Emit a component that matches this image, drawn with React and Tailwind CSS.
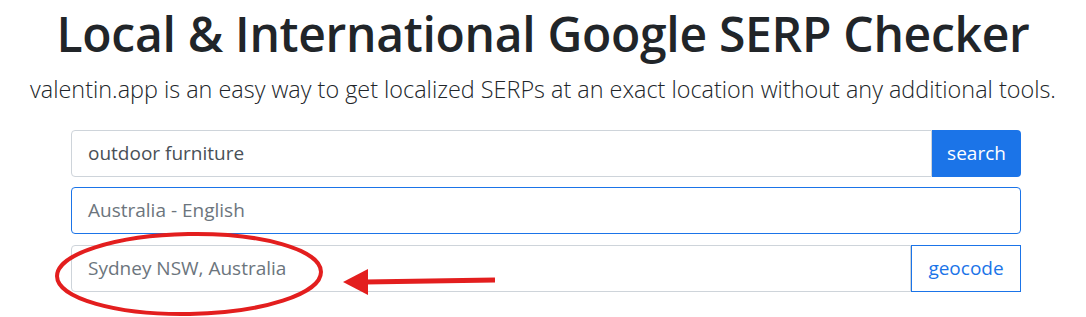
export default function App() {
  return (
    <div className="relative w-[1086px] h-[317px] bg-white overflow-hidden" style={{ fontFamily: '"Open Sans", "Noto Sans", sans-serif' }}>
      <h1 className="pt-[2px] text-center text-[48px] leading-[64px] font-semibold text-[#212529] tracking-[-0.3px]">
        Local &amp; International Google SERP Checker
      </h1>
      <p className="mt-[7px] text-center text-[23.4px] leading-[32px] font-light text-[#212529]">
        valentin.app is an easy way to get localized SERPs at an exact location without any additional tools.
      </p>

      <div className="mx-[71px] mt-[25px] flex flex-col w-[950px]">
        <div className="flex h-[47px]">
          <div className="flex-1 flex items-center px-[16px] border border-[#ced4da] rounded-l-[4px] text-[19px] text-[#495057]">
            outdoor furniture
          </div>
          <button className="w-[89px] bg-[#1b74e8] text-white text-[19px] rounded-r-[4px]">search</button>
        </div>
        <div className="mt-[10px] flex items-center h-[47px] px-[16px] border border-[#1b74e8] rounded-[4px] text-[19px] text-[#6c757d]">
          Australia - English
        </div>
        <div className="mt-[11px] flex h-[47px]">
          <div className="flex-1 flex items-center px-[16px] border border-[#ced4da] rounded-l-[4px] text-[19px] text-[#6c757d]">
            Sydney NSW, Australia
          </div>
          <button className="w-[110px] border border-[#1b74e8] text-[#1b74e8] text-[19px]">geocode</button>
        </div>
      </div>

      <svg className="absolute left-0 top-0 pointer-events-none" width="1086" height="317">
        <ellipse cx="189" cy="274" rx="132" ry="40" fill="none" stroke="#e31e1e" strokeWidth="4" transform="rotate(-1 189 274)" />
        <line x1="495" y1="280" x2="365" y2="282" stroke="#e31e1e" strokeWidth="5" />
        <polygon points="343,282 368,269 368,295" fill="#e31e1e" />
      </svg>
    </div>
  );
}
